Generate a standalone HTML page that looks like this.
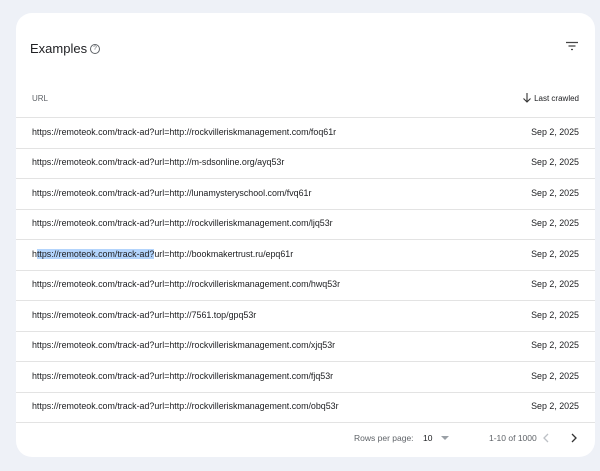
<!DOCTYPE html>
<html><head><style>
body{margin:0;width:600px;height:471px;background:#eef1f7;font-family:"Liberation Sans",sans-serif;overflow:hidden;position:relative}
.card{position:absolute;left:16px;top:13px;width:579px;height:444px;background:#fff;border-radius:16px}
.title{position:absolute;left:14px;top:28px;font-size:13px;color:#202124}
.help{position:absolute;left:74px;top:31px;width:8px;height:8px;border:1px solid #5f6368;border-radius:50%;font-size:6.5px;line-height:8px;text-align:center;color:#5f6368}
.hdr{position:absolute;top:81px;font-size:8px;color:#5f6368}
.row{position:absolute;left:0;width:579px;height:30px;border-top:1px solid #e3e3e3;font-size:8.9px;color:#202124}
.row .u{position:absolute;left:16px;top:8.5px;white-space:nowrap}
.row .d{position:absolute;right:16px;top:8.5px}
.hl{background:#b3d4fc}
.ft{position:absolute;top:420px;font-size:8.5px;color:#5f6368}
</style></head><body>
<div class="card">
<div class="title">Examples</div><div class="help">?</div>
<svg style="position:absolute;left:550px;top:28px" width="12" height="10"><path d="M0 1.5H12M2.5 5H9.5M5 8.5H7" stroke="#444" stroke-width="1.3"/></svg>
<div class="hdr" style="left:16px">URL</div>
<div class="hdr" style="right:16px;color:#202124;font-weight:500">Last crawled</div>
<svg style="position:absolute;left:507px;top:80px" width="8" height="10"><path d="M4 0V9M0.5 5.5L4 9L7.5 5.5" stroke="#333" stroke-width="1.1" fill="none"/></svg>
<div class="row" style="top:104px"><span class="u">https://remoteok.com/track-ad?url=http://rockvilleriskmanagement.com/foq61r</span><span class="d">Sep 2, 2025</span></div>
<div class="row" style="top:134.5px"><span class="u">https://remoteok.com/track-ad?url=http://m-sdsonline.org/ayq53r</span><span class="d">Sep 2, 2025</span></div>
<div class="row" style="top:165px"><span class="u">https://remoteok.com/track-ad?url=http://lunamysteryschool.com/fvq61r</span><span class="d">Sep 2, 2025</span></div>
<div class="row" style="top:195.5px"><span class="u">https://remoteok.com/track-ad?url=http://rockvilleriskmanagement.com/ljq53r</span><span class="d">Sep 2, 2025</span></div>
<div class="row" style="top:226px"><span class="u">h<span class="hl">ttps://remoteok.com/track-ad?</span>url=http://bookmakertrust.ru/epq61r</span><span class="d">Sep 2, 2025</span></div>
<div class="row" style="top:256.5px"><span class="u">https://remoteok.com/track-ad?url=http://rockvilleriskmanagement.com/hwq53r</span><span class="d">Sep 2, 2025</span></div>
<div class="row" style="top:287px"><span class="u">https://remoteok.com/track-ad?url=http://7561.top/gpq53r</span><span class="d">Sep 2, 2025</span></div>
<div class="row" style="top:317.5px"><span class="u">https://remoteok.com/track-ad?url=http://rockvilleriskmanagement.com/xjq53r</span><span class="d">Sep 2, 2025</span></div>
<div class="row" style="top:348px"><span class="u">https://remoteok.com/track-ad?url=http://rockvilleriskmanagement.com/fjq53r</span><span class="d">Sep 2, 2025</span></div>
<div class="row" style="top:378.5px"><span class="u">https://remoteok.com/track-ad?url=http://rockvilleriskmanagement.com/obq53r</span><span class="d">Sep 2, 2025</span></div>
<div class="row" style="top:409px;height:0"></div>
<div class="ft" style="left:338px">Rows per page:</div>
<div class="ft" style="left:407px;color:#202124">10</div>
<svg style="position:absolute;left:425px;top:423px" width="8" height="5"><path d="M0 0H8L4 4Z" fill="#9aa0a6"/></svg>
<div class="ft" style="left:473px">1-10 of 1000</div>
<svg style="position:absolute;left:527px;top:420px" width="6" height="10"><path d="M5 1L1 5L5 9" stroke="#bdc1c6" stroke-width="1.3" fill="none"/></svg>
<svg style="position:absolute;left:555px;top:420px" width="6" height="10"><path d="M1 1L5 5L1 9" stroke="#333" stroke-width="1.3" fill="none"/></svg>
</div>
</body></html>
